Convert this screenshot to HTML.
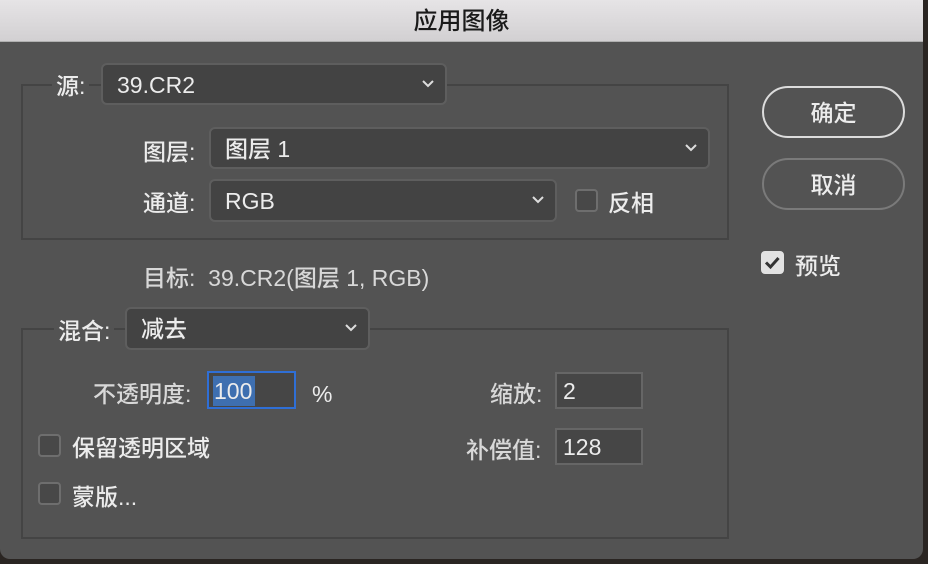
<!DOCTYPE html>
<html><head><meta charset="utf-8"><style>
*{margin:0;padding:0;box-sizing:border-box}
body{width:928px;height:564px;background:#2a2522;position:relative;overflow:hidden;font-family:"Liberation Sans","Noto Sans CJK SC",sans-serif;color:#ececec;font-size:23px;font-weight:500}
.dlg{position:absolute;left:0;top:0;width:923px;height:559px;background:#535353;border-radius:0 0 10px 10px;overflow:hidden}
.title{position:absolute;left:0;top:0;width:923px;height:42px;background:linear-gradient(#e6e4e6,#d2d0d2);border-bottom:1px solid #b0b0b0;color:#1a1a1a;text-align:center;line-height:44px;font-size:24px}
.abs{position:absolute}
.grp{position:absolute;border:2px solid #444;}
.lbl{position:absolute;background:#535353;padding:0 4px;line-height:30px;white-space:nowrap}
.dd{position:absolute;background:#434343;border:2px solid #5e5e5e;border-radius:6px;padding-left:14px;line-height:40px;white-space:nowrap}
.dd svg{position:absolute;right:10px;top:14px}
.cb{position:absolute;width:23px;height:23px;border:2px solid #6e6e6e;border-radius:4px;background:#484848}
.inp{position:absolute;background:#464646;border:2px solid #666;padding-left:6px;line-height:35px}
.btn{position:absolute;width:143px;height:52px;border-radius:26px;text-align:center;line-height:50px}
.t{position:absolute;white-space:nowrap;line-height:30px}
</style></head><body>
<div class="dlg">
<div class="title">应用图像</div>

<div class="grp" style="left:21px;top:84px;width:708px;height:156px"></div>
<div class="lbl" style="left:52px;top:71px">源:</div>
<div class="dd" style="left:101px;top:63px;width:346px;height:42px">39.CR2<svg width="14" height="10"><path d="M2 2l5 5 5-5" stroke="#ddd" stroke-width="2" fill="none"/></svg></div>

<div class="t" style="left:143px;top:137px">图层:</div>
<div class="dd" style="left:209px;top:127px;width:501px;height:42px">图层 1<svg width="14" height="10"><path d="M2 2l5 5 5-5" stroke="#ddd" stroke-width="2" fill="none"/></svg></div>
<div class="t" style="left:143px;top:188px">通道:</div>
<div class="dd" style="left:209px;top:179px;width:348px;height:43px">RGB<svg width="14" height="10"><path d="M2 2l5 5 5-5" stroke="#ddd" stroke-width="2" fill="none"/></svg></div>
<div class="cb" style="left:575px;top:189px"></div>
<div class="t" style="left:608px;top:188px">反相</div>

<div class="t" style="left:143px;top:263px;color:#d8d8d8">目标:&nbsp;&nbsp;39.CR2(图层 1, RGB)</div>

<div class="grp" style="left:21px;top:328px;width:708px;height:211px"></div>
<div class="lbl" style="left:54px;top:316px">混合:</div>
<div class="dd" style="left:125px;top:307px;width:245px;height:43px">减去<svg width="14" height="10"><path d="M2 2l5 5 5-5" stroke="#ddd" stroke-width="2" fill="none"/></svg></div>

<div class="t" style="left:93px;top:379px;color:#d8d8d8">不透明度:</div>
<div class="abs" style="left:207px;top:371px;width:89px;height:38px;border:2px solid #2f6fd6;background:#464646"><span style="position:absolute;left:4px;top:3px;background:#3e6fb0;line-height:30px;padding:0 3px 0 1px">100</span></div>
<div class="t" style="left:312px;top:379px">%</div>

<div class="t" style="left:490px;top:379px;color:#d8d8d8">缩放:</div>
<div class="inp" style="left:555px;top:372px;width:88px;height:37px">2</div>
<div class="t" style="left:466px;top:435px;color:#d8d8d8">补偿值:</div>
<div class="inp" style="left:555px;top:428px;width:88px;height:37px">128</div>

<div class="cb" style="left:38px;top:434px"></div>
<div class="t" style="left:72px;top:433px">保留透明区域</div>
<div class="cb" style="left:38px;top:482px"></div>
<div class="t" style="left:72px;top:482px">蒙版...</div>

<div class="btn" style="left:762px;top:86px;border:2px solid #dcdcdc">确定</div>
<div class="btn" style="left:762px;top:158px;border:2px solid #7a7a7a">取消</div>
<div class="abs" style="left:761px;top:251px;width:23px;height:23px;border-radius:4px;background:#e2e2e2"><svg width="23" height="23"><path d="M5 11.5l4.5 4.5 8-9" stroke="#333" stroke-width="3" fill="none"/></svg></div>
<div class="t" style="left:795px;top:251px">预览</div>
</div>
</body></html>
